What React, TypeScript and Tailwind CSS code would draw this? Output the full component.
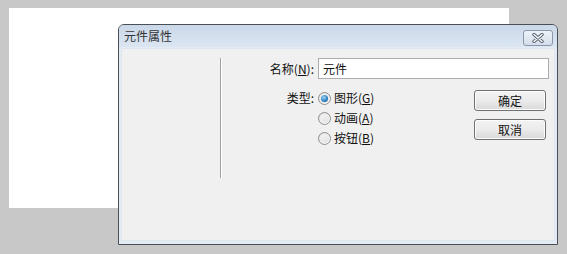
import React from "react";

const font = { fontFamily: '"Noto Sans CJK SC", "Noto Sans", sans-serif' };

function Radio({ checked }: { checked?: boolean }) {
  return (
    <span className="relative inline-flex h-[13px] w-[13px] items-center justify-center rounded-full border border-[#8e8f8f] bg-gradient-to-br from-[#dcdcdc] to-[#ffffff]">
      <span className="h-[9px] w-[9px] rounded-full bg-gradient-to-br from-[#f4f4f4] to-[#e2e2e2]" />
      {checked && (
        <span className="absolute h-[7px] w-[7px] rounded-full bg-[radial-gradient(circle_at_40%_35%,#9fd4f5,#2a7fc0_60%,#1b5a8e)]" />
      )}
    </span>
  );
}

function Btn({ children }: { children: React.ReactNode }) {
  return (
    <div className="flex h-[21px] w-[72px] items-center justify-center rounded-[3px] border border-[#707070] bg-gradient-to-b from-[#f3f3f3] via-[#ebebeb] to-[#d9d9d9] text-[12px] text-[#111] shadow-[inset_0_0_0_1px_#fcfcfc]">
      {children}
    </div>
  );
}

export default function App() {
  return (
    <div className="relative h-[254px] w-[567px] overflow-hidden bg-[#c8c8c8]" style={font}>
      <div className="absolute left-[9px] top-[8px] h-[200px] w-[500px] bg-white" />
      <div className="absolute left-[118px] top-[24px] flex h-[221px] w-[440px] flex-col rounded-t-[6px] border border-[#4a4f55] bg-[#e3ebf5]">
        <div className="flex h-[22px] items-center justify-between rounded-t-[5px] bg-gradient-to-b from-[#cbd8e9] to-[#dbe6f2] pl-[5px] pr-[4px]">
          <span className="text-[12px] text-[#333]">元件属性</span>
          <div className="mt-[3px] flex h-[16px] w-[30px] items-center justify-center rounded-[3px] border border-[#8a98aa] bg-gradient-to-b from-[#eef3f9] to-[#d3dde9]">
            <svg width="14" height="10" viewBox="0 0 14 10">
              <path d="M3 1.5 L11 8.5 M11 1.5 L3 8.5" stroke="#5a6270" strokeWidth="3.4" strokeLinecap="round" />
              <path d="M3 1.5 L11 8.5 M11 1.5 L3 8.5" stroke="#f4f6f9" strokeWidth="1.6" strokeLinecap="round" />
            </svg>
          </div>
        </div>
        <div className="mx-[2px] mb-[3px] mt-[1px] flex flex-1 border border-[#dfe6ee] bg-[#f0f0f0]">
          <div className="w-[98px]" />
          <div className="mt-[9px] flex h-[120px]">
            <div className="w-px bg-[#a0a0a0]" />
            <div className="w-px bg-white" />
          </div>
          <div className="flex flex-1 flex-col pr-[5px] pt-[9px]">
            <div className="flex items-center">
              <div className="w-[96px] pr-[4px] text-right text-[12px] text-[#111]">
                名称(<u>N</u>):
              </div>
              <div className="flex h-[21px] flex-1 items-center border border-[#abadb3] bg-white pl-[4px] text-[12px] text-[#111]">
                元件
              </div>
            </div>
            <div className="mt-[9px] flex">
              <div className="flex w-[96px] justify-end pr-[4px] text-[12px] leading-[20px] text-[#111]">
                类型:
              </div>
              <div className="flex flex-col text-[12px] text-[#111]">
                {[
                  ["图形", "G", true],
                  ["动画", "A", false],
                  ["按钮", "B", false],
                ].map(([t, k, c]) => (
                  <div key={k as string} className="flex h-[20px] items-center gap-[3px]">
                    <Radio checked={c as boolean} />
                    <span>
                      {t as string}(<u>{k as string}</u>)
                    </span>
                  </div>
                ))}
              </div>
              <div className="ml-auto mr-[3px] mt-[2px] flex flex-col gap-[8px]">
                <Btn>确定</Btn>
                <Btn>取消</Btn>
              </div>
            </div>
          </div>
        </div>
      </div>
    </div>
  );
}
